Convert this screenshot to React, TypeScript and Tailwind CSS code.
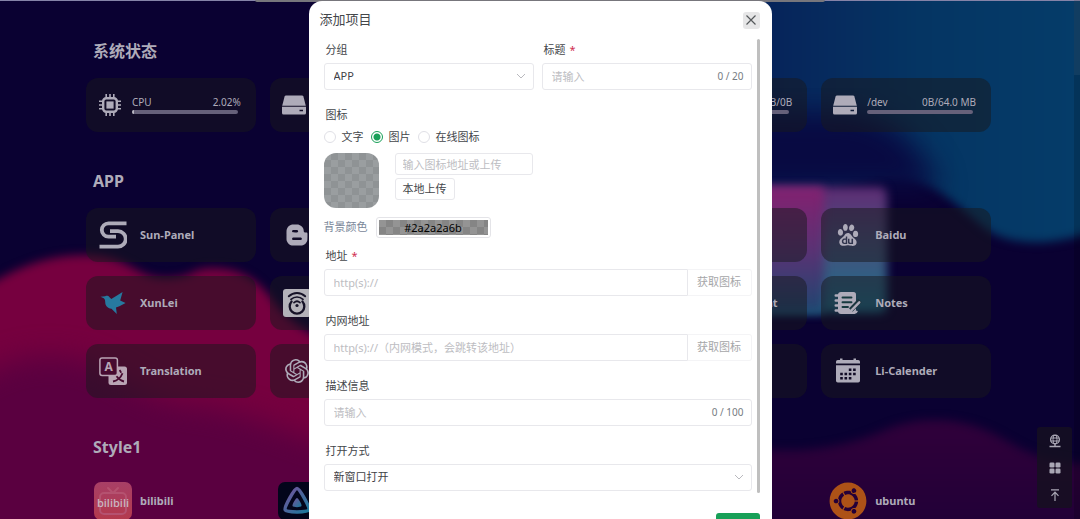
import type { ReactNode } from "react";
import { FaBloggerB, FaUbuntu } from "react-icons/fa";
import { SiBaidu, SiOpenai } from "react-icons/si";

function CpuIcon() {
  return (
    <svg viewBox="0 0 24 24" className="size-6" fill="none" stroke="currentColor">
      <path d="M8.200 1v4M12 1v4M15.800 1v4M8.200 19v4M12 19v4M15.800 19v4M1 8.200h4M1 12h4M1 15.800h4M19 8.200h4M19 12h4M19 15.800h4" strokeWidth="1.600" />
      <rect x="5.200" y="5.200" width="13.600" height="13.600" rx="3" strokeWidth="2.400" />
      <rect x="8.400" y="8.400" width="7.200" height="7.200" fill="currentColor" stroke="none" />
    </svg>
  );
}

function DriveIcon() {
  return (
    <svg viewBox="0 0 24 24" className="size-6" fill="currentColor">
      <path d="M4 2.500h16a1.500 1.500 0 0 1 1.400 1l2.400 9.300H.2l2.400-9.300A1.500 1.500 0 0 1 4 2.500z" />
      <path fillRule="evenodd" d="M0 13.800h24v6.200a1.500 1.500 0 0 1-1.500 1.500h-21A1.500 1.500 0 0 1 0 20zM17.500 16.800v1.500h3.500v-1.500z" />
    </svg>
  );
}

function SunPanelIcon() {
  return (
    <svg viewBox="0 0 28 28" className="size-7" fill="none" stroke="currentColor">
      <path d="M27.500 2.300H9.500a6.700 6.700 0 0 0 0 13.400H17" strokeWidth="3.800" />
      <path d="M.5 25.700H19a6.700 6.700 0 0 0 0-15.500h-8" strokeWidth="3.800" />
    </svg>
  );
}

function BirdIcon() {
  return (
    <svg viewBox="0 0 28 28" className="size-7" fill="#27799f">
      <path d="M1.500 7.800l4.700-.6c1.700-.8 3.300-.3 4.300 1l1.800 1.900L23.600 3l-2.400 8.600 5.400 2.400-6.200 3.300-3.400 1.300.8 6.400-5.300-5.200c-4.200-.9-6.300-3.400-6.300-6.900 0-1.600-.4-2.800-1.400-3.700z" />
    </svg>
  );
}

function RouterIcon() {
  return (
    <svg viewBox="0 0 28 28" className="size-7">
      <rect width="28" height="28" rx="3" fill="#b4b2b9" />
      <g fill="none" stroke="#161227" strokeLinecap="round">
        <path d="M5.800 7.300c4.600-4.400 11.800-4.400 16.400 0" strokeWidth="1.900" />
        <path d="M8 10.400c3.400-3.200 8.600-3.200 12 0" strokeWidth="1.700" />
        <path d="M8.600 12.500a7.300 7.300 0 1 0 10.800 0" strokeWidth="2.300" />
        <path d="M11 13.600a4.500 4.500 0 0 1 6 0" strokeWidth="1.700" />
      </g>
      <circle cx="14" cy="16.500" r="1.600" fill="#161227" />
    </svg>
  );
}

function TranslationIcon() {
  return (
    <svg viewBox="0 0 28 28" className="size-7">
      <rect x="9.500" y="9.500" width="18.500" height="18.500" rx="2.500" fill="#b9a4b4" />
      <rect x=".9" y=".9" width="17.500" height="17.500" rx="2.200" fill="#470a30" stroke="#b9a4b4" strokeWidth="1.500" />
      <text x="9.700" y="14" textAnchor="middle" fontSize="12" fontWeight="700" fontFamily="Noto Sans" fill="#b9a4b4">A</text>
      <path d="M20.500 13.200c1 1 1.300 1.700 1.600 2.500M14 24.500c4.500-.8 7.700-3.500 9.500-8.200M17.500 19.200c2.500 3.200 4.500 4.700 7.500 5.300" fill="none" stroke="#470a30" strokeWidth="1.800" />
    </svg>
  );
}

function NotesIcon() {
  return (
    <svg viewBox="0 0 28 28" className="size-7">
      <path d="M7 3h12.500a2.500 2.500 0 0 1 2.500 2.500V21a4 4 0 0 1-4 4H7a3 3 0 0 1-3-3V6a3 3 0 0 1 3-3z" fill="currentColor" />
      <path d="M1.700 6.500H6M1.700 11.500H6M1.700 16.500H6M1.700 21.500H6" stroke="currentColor" strokeWidth="2.400" strokeLinecap="round" />
      <path d="M8.500 8.500h9M8.500 13.200h9M8.500 18h5.500" stroke="#16393f" strokeWidth="1.900" strokeLinecap="round" />
      <path d="M26 11.500l-9.200 9.400" fill="none" stroke="#1b353e" strokeWidth="5" />
      <path d="M25.300 13.300l-7.600 7.800" stroke="currentColor" strokeWidth="2.400" strokeLinecap="round" />
      <path d="M14 23.800h6.500a2.500 2.500 0 0 0 2.300-2" fill="none" stroke="currentColor" strokeWidth="2.300" />
    </svg>
  );
}

function CalendarIcon() {
  return (
    <svg viewBox="0 0 28 28" className="size-7">
      <path d="M2 6.500V4.800A1.800 1.800 0 0 1 3.800 3H6V1.500h2.500V3h11V1.500H22V3h2.200A1.800 1.800 0 0 1 26 4.800v1.700z" fill="currentColor" />
      <path d="M2 8.200h24v15.500a1.800 1.800 0 0 1-1.800 1.800H3.800A1.800 1.800 0 0 1 2 23.700z" fill="currentColor" />
      <path d="M14.800 12.800h6.900M6.200 17h15.500M6.200 21.200h11.200" stroke="#110b25" strokeWidth="2.600" strokeDasharray="2.600 1.700" />
    </svg>
  );
}

function BilibiliIcon() {
  return (
    <svg viewBox="0 0 38 38" className="size-[38px]">
      <defs>
        <linearGradient id="bili" x1="0" y1="0" x2="0" y2="1">
          <stop offset="0" stopColor="#a83f66" />
          <stop offset="1" stopColor="#b43a4d" />
        </linearGradient>
      </defs>
      <rect width="38" height="38" rx="7" fill="url(#bili)" />
      <g fill="none" stroke="#b55270" strokeWidth="2" strokeLinecap="round">
        <rect x="6" y="11" width="26" height="21" rx="4" />
        <path d="M14 6l4 4M24 6l-4 4" />
      </g>
      <text x="19" y="24.500" textAnchor="middle" fontSize="11" fontWeight="600" fontFamily="Open Sans" fill="#c9b5bf">bilibili</text>
    </svg>
  );
}

function JellyfinIcon() {
  return (
    <svg viewBox="0 0 38 38" className="size-[38px]">
      <defs>
        <linearGradient id="jelly" x1="0" y1="0" x2="1" y2="1">
          <stop offset="0" stopColor="#77529c" />
          <stop offset="1" stopColor="#19799c" />
        </linearGradient>
      </defs>
      <rect width="38" height="38" rx="7" fill="#03051b" />
      <path d="M19 6.500c2.500 0 13 18.500 11.800 21.300s-22.400 2.800-23.600 0S16.500 6.500 19 6.500z" fill="none" stroke="url(#jelly)" strokeWidth="3.500" />
      <path d="M19 16c1.300 0 5 6.500 4.500 8s-8.500 1.500-9 0 3.200-8 4.500-8z" fill="url(#jelly)" />
    </svg>
  );
}

function Backdrop() {
  return (
    <svg
      aria-hidden="true"
      className="absolute inset-0 -z-10 h-full w-full"
      viewBox="0 0 1080 519"
      preserveAspectRatio="none"
    >
      <defs>
        <filter id="soft" x="-20%" y="-20%" width="140%" height="140%" colorInterpolationFilters="sRGB">
          <feGaussianBlur stdDeviation="5" />
        </filter>
        <filter id="softer" x="-30%" y="-30%" width="160%" height="160%" colorInterpolationFilters="sRGB">
          <feGaussianBlur stdDeviation="14" />
        </filter>
        <linearGradient id="sky" x1="0" y1="0" x2="1" y2="0">
          <stop offset="0" stopColor="#071848" />
          <stop offset=".25" stopColor="#06235a" />
          <stop offset=".6" stopColor="#053563" />
          <stop offset="1" stopColor="#053d6a" />
        </linearGradient>
        <linearGradient id="tileA" x1="0" y1="0" x2="0" y2="1">
          <stop offset="0" stopColor="#842070" />
          <stop offset=".5" stopColor="#5a3274" />
          <stop offset="1" stopColor="#1e4670" />
        </linearGradient>
        <linearGradient id="tileB" x1="0" y1="0" x2="0" y2="1">
          <stop offset="0" stopColor="#5f2c74" />
          <stop offset=".45" stopColor="#46507c" />
          <stop offset="1" stopColor="#1b6c88" />
        </linearGradient>
        <linearGradient id="dusk" x1="0" y1="0" x2="0" y2="1">
          <stop offset="0" stopColor="#30003a" />
          <stop offset="1" stopColor="#1c0036" />
        </linearGradient>
      </defs>
      <rect width="1080" height="519" fill="#0a0132" />
      <path filter="url(#soft)" fill="#76003f" d="M-20 290C10 272 40 255 85 255S135 278 165 278 190 268 212 268C245 268 262 284 275 303S300 325 330 345V560H-20z" />
      <path filter="url(#softer)" fill="#5a0040" d="M-40 390C0 360 40 350 80 360S140 400 190 405 270 425 340 450V580H-40z" />
      <path filter="url(#soft)" fill="url(#sky)" d="M650-20H1100V228C1060 246 1010 248 985 228S930 177 895 176 830 205 650 195z" />
      <path filter="url(#softer)" fill="#080a42" d="M640 112H850C890 118 920 140 940 190H640z" />
      <rect filter="url(#soft)" x="740" y="187" width="147" height="126" rx="8" fill="url(#tileB)" />
      <rect filter="url(#soft)" x="740" y="187" width="84" height="126" rx="4" fill="url(#tileA)" />
      <path filter="url(#soft)" fill="url(#dusk)" d="M740 445C800 458 850 445 885 430S960 418 990 432 1030 462 1100 465V560H740z" />
    </svg>
  );
}

function StatusCard({ icon, name, value, percent = 0 }: { icon: ReactNode; name?: string; value?: string; percent?: number }) {
  return (
    <article className="flex h-[54px] items-center gap-[10px] rounded-xl bg-[#17171c]/50 pr-[15px] pl-3">
      {icon}
      <div className="min-w-0 flex-1">
        <div className="flex h-4 justify-between text-[10px] leading-4 whitespace-nowrap">
          <span>{name}</span>
          <span>{value}</span>
        </div>
        <div className="mr-[3px] mb-[2px] h-1 overflow-hidden rounded-full bg-[#66617a]">
          <div className="h-full bg-[#b9b7c2]" style={{ width: `${percent}%` }} />
        </div>
      </div>
    </article>
  );
}

function AppTile({ icon, name, plain = false }: { icon?: ReactNode; name?: string; plain?: boolean }) {
  return (
    <a
      href="#"
      className={`flex h-[54px] items-center rounded-xl text-[11px] font-bold whitespace-nowrap ${plain ? "" : "bg-[#17171c]/50"}`}
    >
      <span className="flex w-[54px] shrink-0 justify-center">{icon}</span>
      {name}
    </a>
  );
}

function Section({ title, children }: { title: string; children: ReactNode }) {
  return (
    <section>
      <h2 className="mb-[15px] pl-[7px] text-base leading-6 font-bold">{title}</h2>
      <div className="grid grid-cols-5 gap-[14px]">{children}</div>
    </section>
  );
}

const fieldBox = "block h-[27px] w-full rounded-[3px] border border-[#e8e8ec] bg-white px-[9px] text-[11px] text-[#3f4246] outline-none placeholder:text-[#bdbdc2]";

function Field({ id, label, required = false, children }: { id: string; label: string; required?: boolean; children: ReactNode }) {
  return (
    <div className="mb-[14px]">
      <label htmlFor={id} className="mb-[2px] block pl-[2px] text-[11px] leading-[22px]">
        {label}
        {required && <span className="ml-1 text-[#d03050]">*</span>}
      </label>
      {children}
    </div>
  );
}

function SelectBox({ id, value }: { id: string; value: string }) {
  return (
    <div className="relative">
      <select id={id} className={`${fieldBox} appearance-none`}>
        <option>{value}</option>
      </select>
      <svg viewBox="0 0 10 10" className="pointer-events-none absolute top-2 right-2 size-[10px]" fill="none" stroke="#b9b9be">
        <path d="M1 3l4 4 4-4" />
      </svg>
    </div>
  );
}

function CountedInput({ id, count }: { id: string; count: string }) {
  return (
    <div className="relative">
      <input id={id} placeholder="请输入" className={fieldBox} />
      <span className="pointer-events-none absolute top-0 right-2 text-[10px] leading-[27px] text-[#767c82]">{count}</span>
    </div>
  );
}

function UrlInput({ id, placeholder }: { id: string; placeholder: string }) {
  return (
    <div className="flex">
      <input id={id} placeholder={placeholder} className={`${fieldBox} min-w-0 flex-1 rounded-r-none`} />
      <button type="button" disabled className="h-[27px] w-16 shrink-0 rounded-r-[3px] border border-l-0 border-[#f4f4f6] text-[11px] text-[#a5a6a8]">
        获取图标
      </button>
    </div>
  );
}

function RadioOption({ label, checked = false }: { label: string; checked?: boolean }) {
  return (
    <label className="flex items-center gap-[6px]">
      <input
        type="radio"
        name="icon-type"
        defaultChecked={checked}
        className="size-3 appearance-none rounded-full border border-[#e0e0e6] bg-white checked:border-[#18a058] checked:bg-[radial-gradient(circle,#18a058_3px,transparent_4px)]"
      />
      {label}
    </label>
  );
}

function AddItemDialog() {
  return (
    <div className="absolute inset-0 z-10 flex items-start justify-center overflow-hidden pt-px">
      <div role="dialog" aria-labelledby="dialog-title" className="w-[463px] shrink-0 rounded-t-[13px] bg-white pr-3 pl-[15px] text-[#43464a]">
        <header className="flex h-[38px] items-center justify-between">
          <h1 id="dialog-title" className="-ml-1 text-[13px]">添加项目</h1>
          <button type="button" aria-label="关闭" className="flex size-[17px] items-center justify-center rounded-[3px] bg-[#e6e6e7]">
            <svg viewBox="0 0 12 12" className="size-3" fill="none" stroke="#55585b" strokeWidth="1.200">
              <path d="M1.500 1.500l9 9M10.500 1.500l-9 9" />
            </svg>
          </button>
        </header>

        <form className="flex gap-[5px]">
          <div className="h-[454px] min-w-0 flex-1">
            <div className="grid grid-cols-2 gap-2">
              <Field id="group" label="分组">
                <SelectBox id="group" value="APP" />
              </Field>
              <Field id="title" label="标题" required>
                <CountedInput id="title" count="0 / 20" />
              </Field>
            </div>

            <fieldset className="mb-[7px] text-[11px]">
              <legend className="pl-[2px] leading-[22px]">图标</legend>
              <div className="flex gap-[7px] leading-[22px]">
                <RadioOption label="文字" />
                <RadioOption label="图片" checked />
                <RadioOption label="在线图标" />
              </div>
              <div className="mt-[5px] flex gap-4">
                <div className="size-[55px] rounded-xl bg-[conic-gradient(#8f9395_25%,#9a9ea0_0_50%,#8f9395_0_75%,#9a9ea0_0)] bg-[length:14px_14px]" />
                <div className="flex flex-col items-start gap-[3px]">
                  <input aria-label="图标地址" placeholder="输入图标地址或上传" className="h-[22px] w-[138px] rounded-[3px] border border-[#e8e8ec] px-[7px] text-[11px] placeholder:text-[#bdbdc2]" />
                  <button type="button" className="h-[22px] rounded-[3px] border border-[#e8e8ec] px-[7px] text-[11px] leading-5">本地上传</button>
                </div>
              </div>
              <div className="mt-[9px] flex items-center gap-2">
                <label htmlFor="bg-color" className="text-[#7a8799]">背景颜色</label>
                <div className="h-[21px] w-[115px] rounded-[3px] border border-[#e4e4e8] p-[2px]">
                  <input
                    id="bg-color"
                    defaultValue="#2a2a2a6b"
                    className="block h-full w-full bg-[conic-gradient(#858585_25%,#949494_0_50%,#858585_0_75%,#949494_0)] bg-[length:14px_14px] text-center text-[11px] text-black"
                  />
                </div>
              </div>
            </fieldset>

            <Field id="url" label="地址" required>
              <UrlInput id="url" placeholder="http(s)://" />
            </Field>
            <Field id="lan-url" label="内网地址">
              <UrlInput id="lan-url" placeholder="http(s)://（内网模式，会跳转该地址）" />
            </Field>
            <Field id="description" label="描述信息">
              <CountedInput id="description" count="0 / 100" />
            </Field>
            <Field id="open-method" label="打开方式">
              <SelectBox id="open-method" value="新窗口打开" />
            </Field>
          </div>
          <div className="w-[3px] rounded-full bg-[#bfbfbf]" />
        </form>

        <footer className="flex justify-end pt-5 pb-4">
          <button type="button" aria-label="保存" className="h-7 w-11 rounded-[3px] bg-[#18a058]" />
        </footer>
      </div>
    </div>
  );
}

function QuickBar() {
  const button = "flex h-[27px] w-[35px] items-center justify-center";
  return (
    <nav className="absolute right-2 bottom-[11px] flex flex-col rounded-[3px] bg-[#15101f]/80 text-[#aaa7b5]">
      <button type="button" aria-label="网络" className={button}>
        <svg viewBox="0 0 14 14" className="size-[14px]" fill="none" stroke="currentColor">
          <circle cx="7" cy="5.500" r="4.400" strokeWidth="1.300" />
          <ellipse cx="7" cy="5.500" rx="2" ry="4.400" strokeWidth="1" />
          <path d="M2.800 4h8.400M2.800 7h8.400" strokeWidth="1" />
          <path d="M7 10v2.500M1.500 12.500h11" strokeWidth="1.400" />
        </svg>
      </button>
      <button type="button" aria-label="应用" className={button}>
        <svg viewBox="0 0 12 12" className="size-3" fill="currentColor">
          <rect x=".5" y=".5" width="5" height="5" rx="1.300" />
          <rect x="6.500" y=".5" width="5" height="5" rx="1.300" />
          <rect x=".5" y="6.500" width="5" height="5" rx="1.300" />
          <rect x="6.500" y="6.500" width="5" height="5" rx="1.300" />
        </svg>
      </button>
      <button type="button" aria-label="返回顶部" className={button}>
        <svg viewBox="0 0 12 12" className="size-3" fill="none" stroke="currentColor" strokeWidth="1.200">
          <path d="M2 .8h8M6 12V3.500M2.500 6.800L6 3.200l3.500 3.600" />
        </svg>
      </button>
    </nav>
  );
}

export default function App() {
  return (
    <div className="relative isolate h-screen overflow-hidden text-[#aeabb9] [font-family:'Noto_Sans','Noto_Sans_CJK_SC',sans-serif]">
      <Backdrop />
      <div className="flex h-px justify-center bg-[#8583a8]">
        <div className="h-[2px] w-[570px] rounded-b bg-[#77767c]" />
      </div>

      <div className="pr-[3px]">
        <main className="mx-auto flex max-w-[905px] flex-col gap-[37px] pt-[38px]">
          <Section title="系统状态">
            <StatusCard icon={<CpuIcon />} name="CPU" value="2.02%" percent={2} />
            <StatusCard icon={<DriveIcon />} />
            <StatusCard icon={<DriveIcon />} />
            <StatusCard icon={<DriveIcon />} value="0B/0B" />
            <StatusCard icon={<DriveIcon />} name="/dev" value="0B/64.0 MB" />
          </Section>

          <Section title="APP">
            <AppTile icon={<SunPanelIcon />} name="Sun-Panel" />
            <AppTile icon={<FaBloggerB className="size-6" />} />
            <AppTile />
            <AppTile />
            <AppTile icon={<SiBaidu className="size-[22px]" />} name="Baidu" />
            <AppTile icon={<BirdIcon />} name="XunLei" />
            <AppTile icon={<RouterIcon />} />
            <AppTile />
            <AppTile name="Home Assistant" />
            <AppTile icon={<NotesIcon />} name="Notes" />
            <AppTile icon={<TranslationIcon />} name="Translation" />
            <AppTile icon={<SiOpenai className="size-6" />} />
            <AppTile />
            <AppTile />
            <AppTile icon={<CalendarIcon />} name="Li-Calender" />
          </Section>

          <Section title="Style1">
            <AppTile plain icon={<BilibiliIcon />} name="bilibili" />
            <AppTile plain icon={<JellyfinIcon />} />
            <AppTile plain />
            <AppTile plain />
            <AppTile plain icon={<FaUbuntu className="size-[38px] text-[#ad5217]" />} name="ubuntu" />
          </Section>
        </main>
      </div>

      <QuickBar />
      <div className="absolute inset-y-0 right-0 w-[6px] bg-black/15">
        <div className="h-[75px] bg-white/5" />
      </div>
      <AddItemDialog />
    </div>
  );
}
